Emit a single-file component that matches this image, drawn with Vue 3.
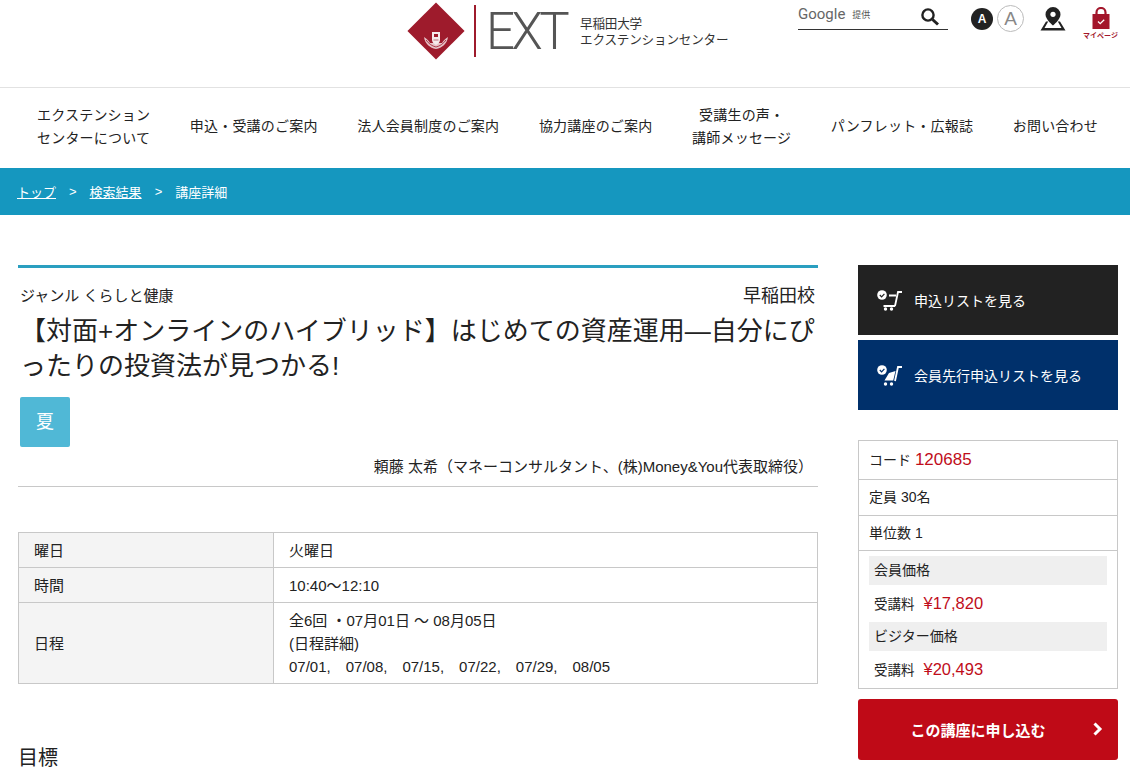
<script setup>
const nav = [
  ['エクステンション', 'センターについて'],
  ['申込・受講のご案内'],
  ['法人会員制度のご案内'],
  ['協力講座のご案内'],
  ['受講生の声・', '講師メッセージ'],
  ['パンフレット・広報誌'],
  ['お問い合わせ'],
]
const rows = [
  { k: '曜日', v: ['火曜日'] },
  { k: '時間', v: ['10:40〜12:10'] },
  { k: '日程', v: ['全6回 ・07月01日 〜 08月05日', '(日程詳細)', '07/01,　07/08,　07/15,　07/22,　07/29,　08/05'] },
]
const prices = [
  { label: '会員価格', fee: '¥17,820' },
  { label: 'ビジター価格', fee: '¥20,493' },
]
</script>

<template>
  <div class="page">
    <header class="top">
      <div class="logo">
        <svg class="mark" width="60" height="60" viewBox="0 0 60 60">
          <rect x="9.800" y="9.800" width="40.400" height="40.400" transform="rotate(45 30 30)" fill="#9e1b2c" />
          <path d="M18 36c1 7 6 11 12 12 6-1 11-5 12-12-3 2-5 4-6 6h-12c-1-2-3-4-6-6z" fill="#e6c3c8" />
          <path d="M20 39c3 4 6 6 10 7 4-1 7-3 10-7" fill="none" stroke="#9e1b2c" stroke-width="0.800" />
          <path d="M26 31h8v8c0 2-2 4-4 5-2-1-4-3-4-5z" fill="#f6ebec" />
          <rect x="28" y="33" width="4" height="3" fill="#9e1b2c" />
          <path d="M27.500 39h5" stroke="#b9707b" stroke-width="1" />
        </svg>
        <span class="vline"></span>
        <span class="ext">EXT</span>
        <span class="logotext">早稲田大学<br />エクステンションセンター</span>
      </div>
      <div class="search">
        <span class="google">Google</span>
        <span class="teikyo">提供</span>
        <svg class="lens" width="20" height="20" viewBox="0 0 20 20">
          <circle cx="8" cy="8" r="5.600" fill="none" stroke="#222" stroke-width="2.400" />
          <path d="M12.500 12.500l5.500 5" stroke="#222" stroke-width="3" />
        </svg>
      </div>
      <div class="sizes">
        <span class="size-on">A</span>
        <span class="size-off">A</span>
      </div>
      <svg class="pin" width="28" height="26" viewBox="0 0 28 26">
        <path d="M14 1a7.500 7.500 0 0 0-7.500 7.500c0 5 7.500 11 7.500 11s7.500-6 7.500-11A7.500 7.500 0 0 0 14 1z" fill="#222" />
        <circle cx="14" cy="8.300" r="2.600" fill="#fff" />
        <path d="M7 15.500L1.500 24.500h25L21 15.500l-2.200 0 3.700 6.500H5.500l3.700-6.500z" fill="#222" />
      </svg>
      <div class="mypage">
        <svg width="18" height="22" viewBox="0 0 18 22">
          <path d="M4.500 8V5.500a4.500 4.500 0 0 1 9 0V8" fill="none" stroke="#a3162b" stroke-width="2.200" />
          <rect x="0.500" y="7" width="17" height="15" fill="#a3162b" />
          <path d="M6 14.500l2.200 2.200 4-4" fill="none" stroke="#fff" stroke-width="1.300" />
        </svg>
        <span>マイページ</span>
      </div>
    </header>

    <nav class="nav">
      <a v-for="(item, i) in nav" :key="i" class="nav-item">
        <span v-for="line in item" :key="line">{{ line }}</span>
      </a>
    </nav>

    <div class="crumbs">
      <a>トップ</a><i>&gt;</i><a>検索結果</a><i>&gt;</i><span>講座詳細</span>
    </div>

    <main class="main">
      <section class="left">
        <div class="meta">
          <span>ジャンル くらしと健康</span>
          <span class="campus">早稲田校</span>
        </div>
        <h1>【対面+オンラインのハイブリッド】はじめての資産運用―自分にぴったりの投資法が見つかる!</h1>
        <div class="season">夏</div>
        <p class="teacher">頼藤 太希（マネーコンサルタント、(株)Money&amp;You代表取締役）</p>
        <table class="info">
          <tbody>
            <tr v-for="r in rows" :key="r.k">
              <th>{{ r.k }}</th>
              <td><div v-for="l in r.v" :key="l">{{ l }}</div></td>
            </tr>
          </tbody>
        </table>
        <h2>目標</h2>
      </section>

      <aside class="right">
        <a class="listbtn black">
          <svg width="26" height="21" viewBox="0 0 26 21">
            <circle cx="5" cy="5" r="4.800" fill="#fff" />
            <path d="M2.800 5l1.800 1.800 2.800-3" fill="none" stroke="#222" stroke-width="1.200" />
            <path d="M12 5.500h7M6.500 16h11.500M25 2h-4L18 16" fill="none" stroke="#fff" stroke-width="1.800" />
            <circle cx="8.500" cy="19" r="1.700" fill="#fff" /><circle cx="14.500" cy="19" r="1.700" fill="#fff" />
          </svg>
          申込リストを見る
        </a>
        <a class="listbtn navy">
          <svg width="26" height="21" viewBox="0 0 26 21">
            <circle cx="5" cy="5" r="4.800" fill="#fff" />
            <path d="M2.800 5l1.800 1.800 2.800-3" fill="none" stroke="#00306b" stroke-width="1.200" />
            <path d="M18.500 6l-2.300 9.500H7.500L12 8z" fill="#fff" />
            <path d="M25 2h-4l-3 14" fill="none" stroke="#fff" stroke-width="1.800" />
            <circle cx="8.500" cy="19" r="1.700" fill="#fff" /><circle cx="14.500" cy="19" r="1.700" fill="#fff" />
          </svg>
          会員先行申込リストを見る
        </a>
        <div class="card">
          <div class="row code">コード <b>120685</b></div>
          <div class="row">定員 30名</div>
          <div class="row">単位数 1</div>
          <div class="price">
            <template v-for="p in prices" :key="p.label">
              <div class="plabel">{{ p.label }}</div>
              <div class="pfee">受講料<b>{{ p.fee }}</b></div>
            </template>
          </div>
        </div>
        <a class="apply">
          この講座に申し込む
          <svg class="chev" width="12" height="14" viewBox="0 0 12 14">
            <path d="M2.500 1.500l5.500 5.500-5.500 5.500" fill="none" stroke="#fff" stroke-width="3" />
          </svg>
        </a>
      </aside>
    </main>
  </div>
</template>

<style>
html, body { margin: 0; background: #fff; overflow: hidden; }
</style>

<style scoped>
.page {
  width: 1130px;
  height: 770px;
  overflow: hidden;
  font-family: "Liberation Sans", "Noto Sans CJK JP", sans-serif;
  font-size: 14px;
  color: #222;
}
.top {
  height: 87px;
  display: flex;
  align-items: flex-start;
  padding-left: 407px;
  border-bottom: 1px solid #e2e2e2;
  box-sizing: content-box;
}
.logo { display: flex; align-items: flex-start; width: 391px; height: 62px; }
.mark { margin: 1px 0 0 -1px; flex: none; }
.vline { width: 2px; height: 52px; margin: 5px 0 0 8px; background: #9e1b2c; flex: none; }
.ext {
  font-family: "Roboto", sans-serif;
  font-weight: 300;
  font-size: 51px;
  line-height: 52px;
  letter-spacing: -3.500px;
  color: #555;
  margin: 6px 0 0 10px;
  width: 94px;
  flex: none;
}
.logotext { font-size: 12.600px; line-height: 16px; color: #333; margin-top: 16px; white-space: nowrap; letter-spacing: -0.200px; }
.search {
  width: 150px;
  height: 30px;
  box-sizing: border-box;
  border-bottom: 1px solid #333;
  position: relative;
  display: flex;
  align-items: flex-start;
  flex: none;
}
.google { font-family: "Roboto", sans-serif; font-size: 15px; line-height: 28px; color: #666; }
.teikyo { font-size: 9px; line-height: 30px; color: #555; margin-left: 7px; }
.lens { position: absolute; left: 122px; top: 7px; }
.sizes { display: flex; align-items: center; margin: 5px 0 0 23px; gap: 4px; }
.size-on {
  width: 22px; height: 22px; border-radius: 50%; background: #222; color: #fff;
  font-size: 12px; font-weight: 700; text-align: center; line-height: 22px;
}
.size-off {
  width: 27px; height: 27px; box-sizing: border-box; border: 1px solid #bbb; border-radius: 50%;
  color: #888; font-size: 19px; text-align: center; line-height: 25px;
}
.pin { margin: 6px 0 0 15px; flex: none; }
.mypage { margin: 7px 0 0 15.500px; display: flex; flex-direction: column; align-items: center; width: 36px; flex: none; }
.mypage svg { display: block; }
.mypage span { font-size: 7px; line-height: 9px; color: #a3162b; font-weight: 700; white-space: nowrap; margin-top: 2px; }

.nav {
  height: 80px;
  box-sizing: border-box;
  display: flex;
  justify-content: space-between;
  align-items: center;
  padding: 0 32px 3px 37px;
}
.nav-item { display: flex; flex-direction: column; align-items: center; font-size: 14px; line-height: 23px; letter-spacing: 0.200px; color: #222; }

.crumbs {
  height: 47px;
  background: #1597bf;
  color: #fff;
  display: flex;
  align-items: center;
  padding-left: 17px;
  font-size: 13px;
}
.crumbs a { text-decoration: underline; }
.crumbs i { font-style: normal; margin: 0 13px; }

.main { display: flex; padding: 50px 12px 0 18px; gap: 40px; }
.left { width: 800px; flex: none; border-top: 3px solid #2a9fc0; }
.meta { display: flex; justify-content: space-between; padding: 16px 3px 0 2px; font-size: 15px; line-height: 24px; height: 24px; }
.campus { font-size: 18px; }
h1 { margin: 6px 0 0; font-weight: 400; font-size: 26px; line-height: 35px; padding-left: 2px; color: #222; }
.season {
  width: 50px; height: 50px; margin: 13px 0 0 2px; background: #50b8d6; color: #fff;
  border-radius: 2px; font-size: 18px; text-align: center; line-height: 50px;
}
.teacher {
  margin: 0; padding: 8px 5px 0 0; height: 31px; text-align: right; font-size: 15px; line-height: 24px;
  border-bottom: 1px solid #c8c8c8;
}
.info { width: 800px; margin-top: 45px; border-collapse: collapse; font-size: 15px; }
.info th, .info td { border: 1px solid #c8c8c8; line-height: 23px; padding: 6px 15px 5px; text-align: left; font-weight: 400; }
.info th { width: 224px; background: #f4f4f4; }
h2 { margin: 60px 0 0; font-weight: 400; font-size: 20px; line-height: 28px; }

.right { width: 260px; flex: none; display: flex; flex-direction: column; }
.listbtn {
  height: 70px; display: flex; align-items: center; color: #fff; font-size: 14px; padding-left: 19px; gap: 11px;
}
.black { background: #222; }
.navy { background: #00306b; margin-top: 5px; }
.card { margin-top: 30px; border: 1px solid #c8c8c8; }
.row { height: 34.500px; line-height: 34px; padding-left: 10px; font-size: 14px; border-bottom: 1px solid #c8c8c8; box-sizing: content-box; }
.code { height: 38px; line-height: 38px; font-size: 14px; }
.code b { font-weight: 400; font-size: 17px; color: #c00d1a; }
.price { padding: 5px 10px 0; }
.plabel { height: 29px; line-height: 29px; padding-left: 5px; background: #efefef; font-size: 14px; }
.pfee { height: 37px; line-height: 37px; padding-left: 5px; font-size: 13.500px; }
.pfee b { font-weight: 400; font-size: 16.500px; color: #c00d1a; margin-left: 9px; }
.apply {
  margin-top: 9.500px; height: 61px; border-radius: 3px; background: #bf0a17; color: #fff; font-weight: 700;
  font-size: 15px; display: flex; align-items: center; justify-content: center; position: relative; padding-right: 20px; box-sizing: border-box;
}
.chev { position: absolute; left: 234px; top: 23px; }
</style>
